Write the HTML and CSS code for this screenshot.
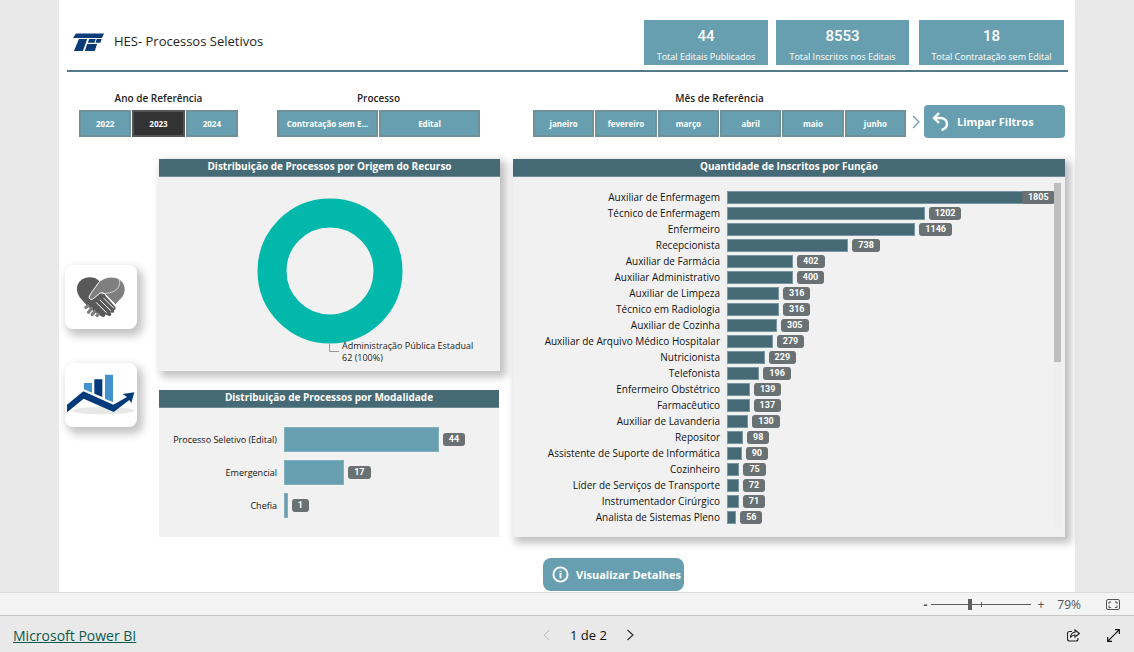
FILE: index.html
```html
<!DOCTYPE html>
<html lang="pt-BR">
<head>
<meta charset="utf-8">
<title>HES - Processos Seletivos</title>
<link rel="stylesheet" href="styles.css">
</head>
<body>
<main class="report">
  <header class="header">
    <svg class="logo" viewBox="68 99 94 54" aria-hidden="true"><path d="M77 100H162L156 114H68ZM86 117H111L98 153H71ZM117 117H137L133 128H113ZM140 117H155L151 128H136ZM111 132H141L134 153H104Z" fill="#083b78"/></svg>
    <h1 class="title">HES- Processos Seletivos</h1>
    <div class="kpis">
      <div class="kpi kpi-s"><strong>44</strong><span>Total Editais Publicados</span></div>
      <div class="kpi kpi-m"><strong>8553</strong><span>Total Inscritos nos Editais</span></div>
      <div class="kpi kpi-l"><strong>18</strong><span>Total Contratação sem Edital</span></div>
    </div>
  </header>

  <section class="filters">
    <div class="filter filter-year"><h2>Ano de Referência</h2><div class="options"><button>2022</button><button class="selected">2023</button><button>2024</button></div></div>
    <div class="filter filter-process"><h2>Processo</h2><div class="options"><button>Contratação sem E...</button><button>Edital</button></div></div>
    <div class="filter filter-month"><h2>Mês de Referência</h2><div class="options"><button>janeiro</button><button>fevereiro</button><button>março</button><button>abril</button><button>maio</button><button>junho</button></div></div>
    <button class="next-months" aria-label="Próximos meses"><svg viewBox="0 0 8 14"><path d="M1 1L7 7L1 13" fill="none" stroke="#6a9ab0" stroke-width="1.2"/></svg></button>
    <button class="action clear"><svg class="undo" viewBox="0 0 17 19"><path d="M7 1L2 6L7 11M2.500 6H8C13 6 15 9 15 12C15 15 13 17 9.500 18" fill="none" stroke="#fff" stroke-width="2.400"/></svg>Limpar Filtros</button>
  </section>

  <div class="board">
    <nav class="shortcuts">
      <button class="tile" aria-label="Contratações">
        <svg class="hands" viewBox="80 78 152 126" aria-hidden="true">
          <path d="M151 94C137 78 108 78 91 95C78 110 81 132 95 147L112 166L128 181L158 201C166 205 172 200 168 194L181 200C189 199 188 193 184 188C195 193 199 187 194 181C203 182 202 174 197 169L170 139L151 94Z" fill="#595959"/>
          <path d="M155 92C172 78 204 77 219 93C234 109 232 132 219 145L200 165L166 131C158 127 154 128 148 134L134 146C126 153 117 147 121 139C126 127 137 116 148 99Z" fill="#7f7f7f" stroke="#fff" stroke-width="3"/>
          <path d="M158 132C172 131 191 130 203 119C215 107 214 94 210 86" fill="none" stroke="#fff" stroke-width="2"/>
          <path d="M142 159L172 189M153 151L185 183M165 146L194 175" stroke="#fff" stroke-width="3" stroke-linecap="round"/>
          <path d="M110 174L116 169M118 188L127 177M129 195L137 186M144 198L147 194" stroke="#7f7f7f" stroke-width="10" stroke-linecap="round"/>
        </svg>
      </button>
      <button class="tile" aria-label="Indicadores">
        <svg class="trend" viewBox="54 374 204 124" aria-hidden="true">
          <ellipse cx="163" cy="484" rx="93" ry="11" fill="#e8e8e8"/>
          <path d="M105 401H129V430L105 420ZM168 376H192V458L168 449Z" fill="#4292cf"/><path d="M136 390H160V443L136 433Z" fill="#033a7c"/>
          <path d="M54 466L103 426L193 466L234 443L221 434L256 429L247 461L241 452L194 488L104 448L54 489Z" fill="#033a7c"/>
        </svg>
      </button>
    </nav>

    <div class="left">
      <section class="panel raised origin">
        <h2>Distribuição de Processos por Origem do Recurso</h2>
        <svg class="donut" viewBox="0 0 146 146" role="img" aria-label="Administração Pública Estadual 62 (100%)"><circle cx="73" cy="73" r="58" fill="none" stroke="#01b8aa" stroke-width="29"/></svg>
        <div class="legend"><svg viewBox="0 0 10 9"><path d="M0.500 0V7.500H10" fill="none" stroke="#999"/></svg><p>Administração Pública Estadual<br>62 (100%)</p></div>
      </section>
      <section class="panel modality">
        <h2>Distribuição de Processos por Modalidade</h2>
        <ul class="bars">
          <li><span class="name">Processo Seletivo (Edital)</span><span class="track"><i style="width:72%"></i><b>44</b></span></li>
          <li><span class="name">Emergencial</span><span class="track"><i style="width:28%"></i><b>17</b></span></li>
          <li><span class="name">Chefia</span><span class="track"><i style="width:1.8%"></i><b>1</b></span></li>
        </ul>
      </section>
    </div>

    <section class="panel raised roles">
      <h2>Quantidade de Inscritos por Função</h2>
      <div class="scroll-area">
        <ul class="bars">
          <li><span class="name">Auxiliar de Enfermagem</span><span class="track"><i style="width:90.8%"></i><b class="overlap">1805</b></span></li>
          <li><span class="name">Técnico de Enfermagem</span><span class="track"><i style="width:60.5%"></i><b>1202</b></span></li>
          <li><span class="name">Enfermeiro</span><span class="track"><i style="width:57.6%"></i><b>1146</b></span></li>
          <li><span class="name">Recepcionista</span><span class="track"><i style="width:37.1%"></i><b>738</b></span></li>
          <li><span class="name">Auxiliar de Farmácia</span><span class="track"><i style="width:20.2%"></i><b>402</b></span></li>
          <li><span class="name">Auxiliar Administrativo</span><span class="track"><i style="width:20.1%"></i><b>400</b></span></li>
          <li><span class="name">Auxiliar de Limpeza</span><span class="track"><i style="width:15.9%"></i><b>316</b></span></li>
          <li><span class="name">Técnico em Radiologia</span><span class="track"><i style="width:15.9%"></i><b>316</b></span></li>
          <li><span class="name">Auxiliar de Cozinha</span><span class="track"><i style="width:15.3%"></i><b>305</b></span></li>
          <li><span class="name">Auxiliar de Arquivo Médico Hospitalar</span><span class="track"><i style="width:14%"></i><b>279</b></span></li>
          <li><span class="name">Nutricionista</span><span class="track"><i style="width:11.5%"></i><b>229</b></span></li>
          <li><span class="name">Telefonista</span><span class="track"><i style="width:9.9%"></i><b>196</b></span></li>
          <li><span class="name">Enfermeiro Obstétrico</span><span class="track"><i style="width:7%"></i><b>139</b></span></li>
          <li><span class="name">Farmacêutico</span><span class="track"><i style="width:6.9%"></i><b>137</b></span></li>
          <li><span class="name">Auxiliar de Lavanderia</span><span class="track"><i style="width:6.5%"></i><b>130</b></span></li>
          <li><span class="name">Repositor</span><span class="track"><i style="width:4.9%"></i><b>98</b></span></li>
          <li><span class="name">Assistente de Suporte de Informática</span><span class="track"><i style="width:4.5%"></i><b>90</b></span></li>
          <li><span class="name">Cozinheiro</span><span class="track"><i style="width:3.8%"></i><b>75</b></span></li>
          <li><span class="name">Líder de Serviços de Transporte</span><span class="track"><i style="width:3.6%"></i><b>72</b></span></li>
          <li><span class="name">Instrumentador Cirúrgico</span><span class="track"><i style="width:3.6%"></i><b>71</b></span></li>
          <li><span class="name">Analista de Sistemas Pleno</span><span class="track"><i style="width:2.8%"></i><b>56</b></span></li>
        </ul>
        <div class="scrollbar"><div class="thumb"></div></div>
      </div>
    </section>
  </div>

  <button class="action details"><svg viewBox="0 0 18 18"><circle cx="9" cy="9" r="7.500" fill="none" stroke="#fff" stroke-width="2"/><path d="M9 5V6.500M9 7.500V13" stroke="#fff" stroke-width="2"/></svg>Visualizar Detalhes</button>
</main>

<div class="zoombar">
  <button class="minus" aria-label="Diminuir zoom">-</button>
  <input type="range" min="0" max="100" value="38" aria-label="Zoom">
  <button aria-label="Aumentar zoom">+</button>
  <span class="percent">79%</span>
  <button aria-label="Ajustar à página"><svg class="fit" viewBox="0 0 14 11"><rect x=".5" y=".5" width="13" height="10" rx="1.500" fill="none" stroke="#555"/><path d="M5 3H3V5M9 3H11V5M3 6.500V8.500H5M11 6.500V8.500H9" fill="none" stroke="#555"/></svg></button>
</div>
<footer class="footer">
  <a href="#">Microsoft Power BI</a>
  <div class="pager">
    <button aria-label="Página anterior" disabled><svg viewBox="0 0 7 12"><path d="M6.500 1L1 6L6.500 11" fill="none" stroke="#bbb"/></svg></button>
    <span>1 de 2</span>
    <button aria-label="Próxima página"><svg viewBox="0 0 7 12"><path d="M.5 1L6 6L.5 11" fill="none" stroke="#333" stroke-width="1.200"/></svg></button>
  </div>
  <div class="tools">
    <button aria-label="Compartilhar"><svg viewBox="0 0 13 13"><path d="M5 2.500H2.500Q.5 2.500 .5 4.500V10Q.5 12 2.500 12H9Q11 12 11 10V9M8 1L12.300 4.500L8 8V6Q5 6 3.500 8.500Q3.700 3.500 8 3.200Z" fill="none" stroke="#222" stroke-width="1.100"/></svg></button>
    <button aria-label="Tela cheia"><svg viewBox="0 0 13 13"><path d="M8 .7H12.300V5M12.300 .7L.7 12.300M.7 8V12.300H5" fill="none" stroke="#111" stroke-width="1.200"/></svg></button>
  </div>
</footer>
</body>
</html>
```
FILE: styles.css
```css
* { box-sizing: border-box; }
body {
  margin: 0;
  min-height: 100vh;
  display: flex;
  flex-direction: column;
  background: #e9e9e9;
  color: #252423;
  font-family: "Open Sans", "Noto Sans", sans-serif;
}
button { font: inherit; color: inherit; border: 0; background: none; padding: 0; }
h1, h2, p, ul { margin: 0; padding: 0; font-weight: inherit; }
ul { list-style: none; }
svg { display: block; }

.report {
  flex: 1;
  margin: 0 59px;
  background: #fff;
  display: flex;
  flex-direction: column;
}

.header {
  margin: 0 7px 0 8px;
  height: 72px;
  padding: 20px 4px 0 6px;
  border-bottom: 2px solid #53798a;
  display: flex;
  align-items: flex-start;
}
.logo { width: 31px; height: 18px; margin-top: 13px; }
.title { margin: 11px auto 0 10px; font-size: 13px; line-height: 20px; }
.kpis { display: flex; gap: 8px; }
.kpi {
  height: 45px;
  padding-top: 6px;
  background: #689fb0;
  color: #fff;
  display: flex;
  flex-direction: column;
  align-items: center;
}
.kpi-s { width: 124px; }
.kpi-m { width: 133px; }
.kpi-l { width: 145px; margin-left: 2px; }
.kpi strong { font: 500 15px/20px Roboto, sans-serif; }
.kpi span { font-size: 9px; line-height: 22px; white-space: nowrap; }

.filters {
  padding: 20px 10px 0 20px;
  display: flex;
  height: 87px;
  align-items: flex-start;
}
.filter h2 { font-size: 10px; line-height: 12px; font-weight: 600; text-align: center; margin-bottom: 6px; }
.options { display: flex; gap: 1px; }
.options button {
  flex: 1;
  height: 27px;
  border: 2px solid #6f919b;
  background: #689fb0;
  color: #fff;
  font-size: 8px;
  font-weight: 700;
  white-space: nowrap;
}
.options .selected { background: #333; border-color: #555; }
.filter-year { flex: 159; }
.filter-process { flex: 203; margin-left: 39px; }
.filter-month { flex: 373; margin-left: 53px; }
.next-months { width: 18px; margin-top: 23px; padding: 0 4px 0 6px; }
.action {
  display: flex;
  align-items: center;
  height: 33px;
  border-radius: 4px;
  background: #689fb0;
  color: #fff;
  font-weight: 700;
}
.clear { width: 141px; margin-top: 13px; padding-left: 8px; font-size: 11px; }
.undo { width: 17px; height: 19px; margin-right: 8px; }

.board {
  display: grid;
  grid-template-columns: 72px 363fr 565fr;
  padding: 0 10px 0 6px;
}
.shortcuts { padding-top: 106px; display: flex; flex-direction: column; gap: 34px; }
.tile {
  height: 64px;
  border-radius: 8px;
  background: #fff;
  box-shadow: 4px 5px 9px 2px #c4c4c4;
  display: flex;
  justify-content: center;
  align-items: center;
}
.hands { width: 50px; }
.trend { width: 68px; }
.left { margin-left: 22px; display: flex; flex-direction: column; gap: 19px; }
.panel { background: #f1f1f1; }
.raised { box-shadow: 4px 4px 8px 2px #c0c0c0; }
.panel h2 {
  height: 18px;
  background: #466a75;
  border-bottom: 1px solid #6f8b94;
  color: #fff;
  font-size: 10px;
  line-height: 15px;
  font-weight: 700;
  text-align: center;
}
.origin { height: 212px; }
.donut { width: 146px; margin: 21px auto 0; }
.legend { display: flex; margin-left: 170px; }
.legend svg { width: 10px; height: 9px; margin: 0 3px 0 0; }
.legend p { font-size: 9px; line-height: 12px; margin-top: -4px; white-space: nowrap; }

.bars li { display: grid; align-items: center; }
.name { text-align: right; white-space: nowrap; color: #111; }
.track { display: flex; align-items: center; min-width: 0; }
.track i { flex: none; background: #466a75; border: 1px solid #7897a0; height: 13px; }
.track b {
  flex: none;
  margin-left: 4px;
  padding: 0 6px;
  border-radius: 3px;
  background: #697173;
  color: #fff;
  font: 700 9px/13px Roboto, sans-serif;
}
.track .overlap { margin-left: -2px; }
.modality { height: 147px; margin-right: 1px; }
.modality .bars { padding-top: 15px; }
.modality li { grid-template-columns: 118px 1fr; column-gap: 7px; height: 33px; }
.modality .name { font-size: 9px; }
.modality i { height: 25px; background: #689fb0; border-color: #84b0bd; }

.roles { margin-left: 13px; }
.scroll-area { display: flex; padding: 6px 4px 4px 0; }
.scroll-area .bars { flex: 1; padding: 6px 0 2px; }
.roles li { grid-template-columns: 207px 1fr; column-gap: 7px; height: 16px; }
.roles .name { font-size: 10px; line-height: 16px; }
.scrollbar { width: 7px; background: #eee; }
.thumb { height: 52%; background: #bebebe; }

.details {
  align-self: center;
  width: 141px;
  margin: 21px 0 1px 93px;
  padding-left: 9px;
  border-radius: 8px;
  font-size: 11px;
  white-space: nowrap;
}
.details svg { width: 17px; height: 17px; margin-right: 7px; flex: none; }

.zoombar {
  height: 24px;
  border-top: 1px solid #dcdcdc;
  border-bottom: 1px solid #c6c6c6;
  background: #f4f4f4;
  color: #555;
  display: flex;
  align-items: center;
  justify-content: flex-end;
  padding-right: 14px;
  font-size: 12px;
}
.minus { font-weight: 700; }
.zoombar input {
  appearance: none;
  width: 100px;
  height: 12px;
  margin: 0 6px 0 4px;
  background: linear-gradient(#605e5c, #605e5c) center / 100% 1px no-repeat, linear-gradient(#605e5c, #605e5c) 50% 50% / 1px 5px no-repeat;
}
.zoombar input::-webkit-slider-thumb { appearance: none; width: 4px; height: 11px; background: #605e5c; }
.percent { margin: 0 25px 0 13px; font-size: 12px; }
.fit { width: 14px; height: 11px; }

.footer {
  height: 36px;
  padding: 2px 14px 0 13px;
  display: grid;
  grid-template-columns: 1fr auto 1fr;
  align-items: center;
  font-size: 13px;
}
.footer a { color: #0b5a4e; justify-self: start; font-size: 14px; }
.pager { display: flex; align-items: center; gap: 20px; margin-left: 44px; color: #111; }
.pager svg { width: 7px; height: 12px; }
.tools { display: flex; gap: 27px; justify-self: end; }
.tools svg { width: 13px; height: 13px; }
```
